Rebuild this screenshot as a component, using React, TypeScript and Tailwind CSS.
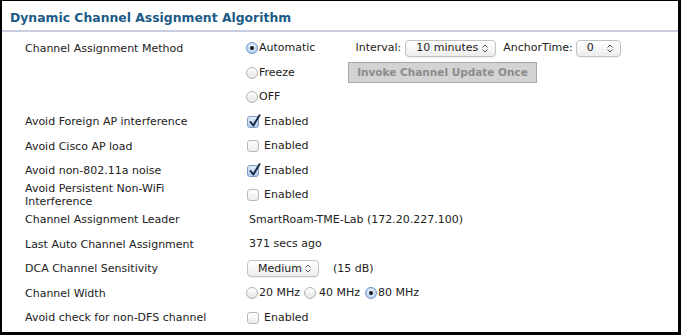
import React from 'react';

const Radio = ({ on = false }: { on?: boolean }) => (
  <span
    className={`inline-flex items-center justify-center w-[12px] h-[12px] rounded-full border shrink-0 ${
      on ? 'border-[#6f95c4] bg-[radial-gradient(circle_at_50%_35%,#eaf2fc,#a9c6ea)]' : 'border-[#b3b3b3] bg-[linear-gradient(#ffffff,#e6e6e6)]'
    }`}
  >
    {on && <span className="w-[4px] h-[4px] rounded-full bg-[#1b1b1b]" />}
  </span>
);

const Check = ({ on = false }: { on?: boolean }) => (
  <span
    className={`relative inline-block w-[12px] h-[12px] rounded-[3px] border shrink-0 ${
      on ? 'border-[#7c9cc8] bg-[linear-gradient(#e4eefb,#b3cdee)]' : 'border-[#b8b8b8] bg-[linear-gradient(#ffffff,#ececec)]'
    }`}
  >
    {on && (
      <svg className="absolute left-[1px] top-[-3px]" width="12" height="14" viewBox="0 0 12 14">
        <path d="M1.5 8 L4.3 11.5 L10.5 1.2" fill="none" stroke="#1a2a44" strokeWidth="2" strokeLinecap="round" strokeLinejoin="round" />
      </svg>
    )}
  </span>
);

const Select = ({ value, w }: { value: string; w: string }) => (
  <span
    className={`${w} inline-flex items-center justify-between h-[17px] pl-[10px] pr-[7px] rounded-[4px] border border-[#c2c2c2] bg-[linear-gradient(#ffffff,#ededed)] shadow-[0_1px_0_rgba(0,0,0,0.05)]`}
  >
    <span>{value}</span>
    <svg width="6" height="9" viewBox="0 0 6 9">
      <path d="M0.5 3.5 L3 1 L5.5 3.5 M0.5 5.5 L3 8 L5.5 5.5" fill="none" stroke="#555" strokeWidth="1" />
    </svg>
  </span>
);

const Enabled = ({ on = false }: { on?: boolean }) => (
  <span className="flex items-center gap-[5px] pl-[1px]">
    <Check on={on} />
    <span>Enabled</span>
  </span>
);

const Row = ({ label, children }: { label?: React.ReactNode; children?: React.ReactNode }) => (
  <div className="flex items-center h-[24.5px]">
    <div className="w-[221px] shrink-0 leading-[13px]">{label}</div>
    <div className="flex items-center flex-1">{children}</div>
  </div>
);

export default function App() {
  return (
    <div className="w-[681px] h-[335px] bg-white border-l-2 border-t border-r-[3px] border-b-[3px] border-black text-[11px] text-[#222] font-['DejaVu_Sans',Verdana,sans-serif] overflow-hidden">
      <div className="pl-[8px] pt-[8px] pb-[4px] border-b-2 border-[#c9cbe0]">
        <h1 className="text-[12.4px] font-bold text-[#1c5b86] leading-[17px]">Dynamic Channel Assignment Algorithm</h1>
      </div>
      <div className="pl-[23px] pt-[4px]">
        <Row label="Channel Assignment Method">
          <span className="flex items-center gap-[1px]"><Radio on /><span>Automatic</span></span>
          <span className="ml-[40px]">Interval:</span>
          <span className="ml-[4px]"><Select value="10 minutes" w="w-[91px]" /></span>
          <span className="ml-[7px]">AnchorTime:</span>
          <span className="ml-[3px]"><Select value="0" w="w-[45px]" /></span>
        </Row>
        <Row>
          <span className="flex items-center gap-[1px] w-[102px]"><Radio /><span>Freeze</span></span>
          <span className="inline-flex items-center justify-center w-[189px] h-[21px] bg-[#d3d3d3] border border-[#a9a9a9] text-[#8c8c8c] font-bold text-[10.5px] whitespace-nowrap">
            Invoke Channel Update Once
          </span>
        </Row>
        <Row>
          <span className="flex items-center gap-[1px]"><Radio /><span>OFF</span></span>
        </Row>
        <Row label="Avoid Foreign AP interference"><Enabled on /></Row>
        <Row label="Avoid Cisco AP load"><Enabled /></Row>
        <Row label="Avoid non-802.11a noise"><Enabled on /></Row>
        <Row label={<>Avoid Persistent Non-WiFi<br />Interference</>}><Enabled /></Row>
        <Row label="Channel Assignment Leader"><span className="pl-[3px]">SmartRoam-TME-Lab (172.20.227.100)</span></Row>
        <Row label="Last Auto Channel Assignment"><span className="pl-[3px]">371 secs ago</span></Row>
        <Row label="DCA Channel Sensitivity">
          <span className="pl-[1px]"><Select value="Medium" w="w-[72px]" /></span>
          <span className="ml-[14px]">(15 dB)</span>
        </Row>
        <Row label="Channel Width">
          <span className="flex items-center gap-[1px]"><Radio /><span>20 MHz</span></span>
          <span className="flex items-center gap-[3px] ml-[4px]"><Radio /><span>40 MHz</span></span>
          <span className="flex items-center gap-[1px] ml-[5px]"><Radio on /><span>80 MHz</span></span>
        </Row>
        <Row label="Avoid check for non-DFS channel"><Enabled /></Row>
      </div>
    </div>
  );
}
